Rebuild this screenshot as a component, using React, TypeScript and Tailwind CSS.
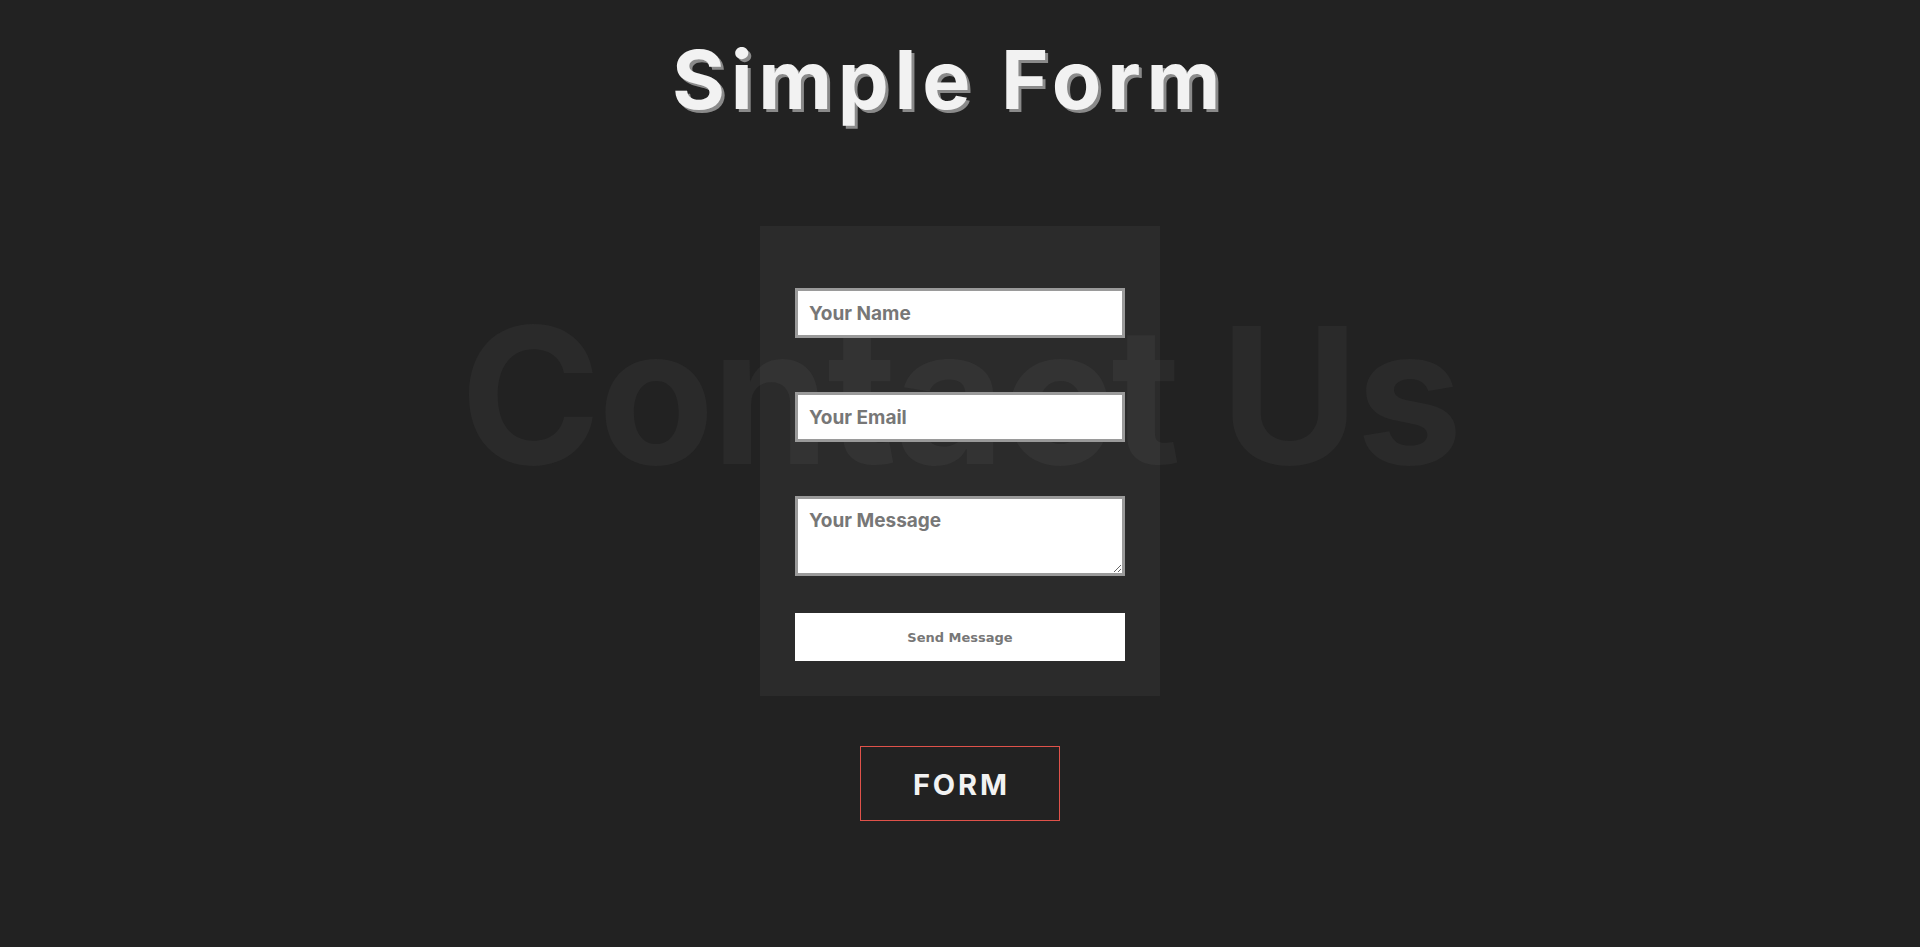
import React from 'react'

const font = { fontFamily: 'Inter, "Noto Sans", sans-serif' }

const fieldClass =
    'w-[330px] border-[3px] border-[#9a9a9a] bg-white px-[11px] text-[19px] font-bold text-[#555] placeholder:text-[#777] outline-none'

export default function App() {
    return (
        <div
            className="min-h-screen w-full bg-[#222222] flex flex-col items-center"
            style={font}
        >
            <h1 className="mt-[40px] text-[81px] leading-none font-bold tracking-[0.07em] pr-[22px] text-[#f2f2f2] [text-shadow:3px_3px_0_#8a8a8a]">
                Simple Form
            </h1>

            <div className="relative mt-[105px]">
                {/* big faded heading behind the form */}
                <div className="absolute top-[74px] left-1/2 -translate-x-1/2 whitespace-nowrap text-[190px] leading-none font-bold tracking-[-0.015em] text-[#2a2a2a] select-none">
                    Contact Us
                </div>

                <form className="relative w-[400px] h-[470px] bg-white/[0.045] flex flex-col items-center pt-[62px]">
                    <input type="text" placeholder="Your Name" className={`${fieldClass} h-[50px]`} />
                    <input type="email" placeholder="Your Email" className={`${fieldClass} h-[50px] mt-[54px]`} />
                    <textarea
                        placeholder="Your Message"
                        className={`${fieldClass} h-[80px] mt-[54px] pt-[10px] leading-[24px]`}
                    />
                    <button
                        type="button"
                        className="mt-[37px] w-[330px] h-[48px] bg-white pt-[1px] text-[13px] font-bold text-[#777]"
                        style={{ fontFamily: '"DejaVu Sans", Verdana, sans-serif' }}
                    >
                        Send Message
                    </button>
                </form>
            </div>

            <button
                type="button"
                className="mt-[50px] w-[200px] h-[75px] border border-[#e0524a] pt-[3px] text-[29px] font-bold tracking-[0.1em] pl-[0.1em] text-[#f2f2f2]"
            >
                FORM
            </button>
        </div>
    )
}
